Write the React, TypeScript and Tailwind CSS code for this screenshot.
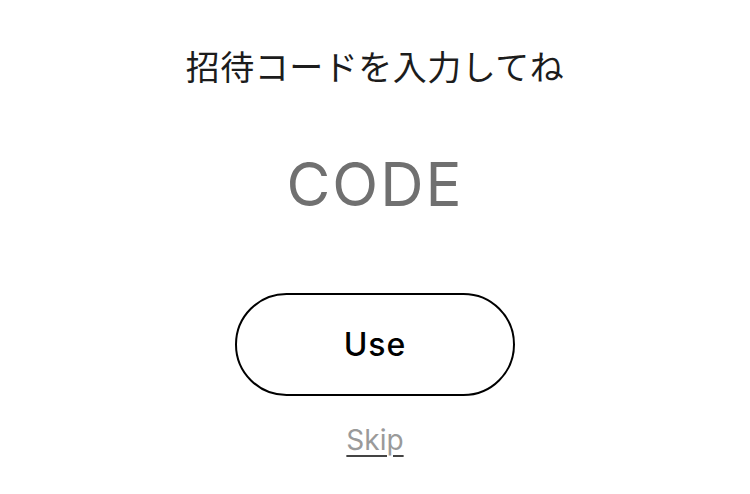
import { FC } from "react";

const App: FC = () => {
    return (
        <div
            className="w-[750px] h-[494px] bg-white flex flex-col items-center"
            style={{ fontFamily: '"Inter", "Noto Sans CJK JP", sans-serif' }}>
            <h1 className="mt-[46px] text-[34px] leading-[44px] text-[#1c1c1c] font-normal tracking-[0.5px]">
                招待コードを入力してね
            </h1>
            <input
                type="text"
                placeholder="CODE"
                className="mt-[54px] w-[500px] h-[80px] text-center text-[60px] tracking-[2px] text-[#707070] placeholder:text-[#707070] outline-none bg-transparent"
            />
            <button
                type="button"
                className="mt-[69px] w-[280px] h-[103px] rounded-full border-2 border-black text-[32px] font-medium text-black tracking-[1px]">
                Use
            </button>
            <span className="mt-[27px] text-[28px] leading-[34px] text-[#9a9a9a] underline underline-offset-[5px] decoration-[#444] decoration-2">
                Skip
            </span>
        </div>
    );
};

export default App;
